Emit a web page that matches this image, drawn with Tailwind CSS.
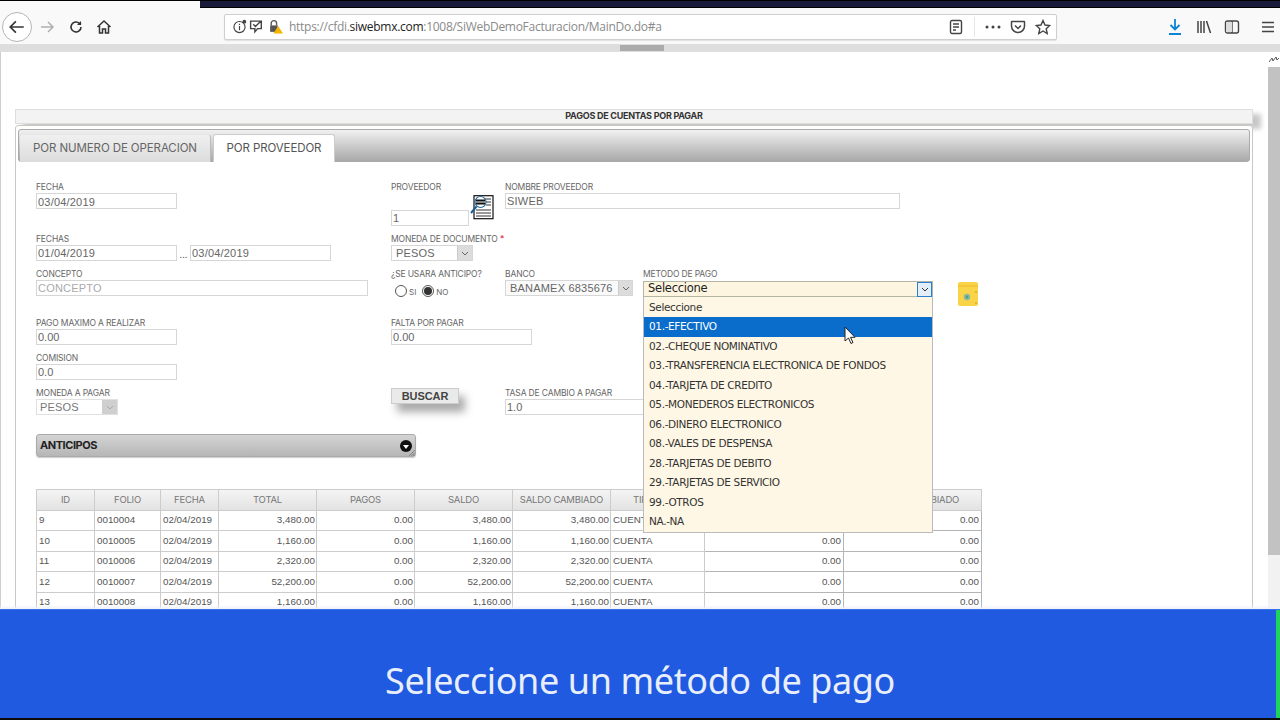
<!DOCTYPE html>
<html>
<head>
<meta charset="utf-8">
<script src="https://cdn.jsdelivr.net/npm/@tailwindcss/browser@4"></script>
</head>
<body class="w-[1280px] h-[720px] overflow-hidden bg-white relative font-['Inter',sans-serif]">

<!-- browser chrome -->
<div class="h-[9px] bg-[#f9f9fa] border-t border-black"><div class="ml-[200px] h-[7px] bg-[#1a1a3a] border-b border-black"></div></div>
<div class="h-[35px] bg-[#f9f9fa] flex items-center">
  <div class="ml-[2px] w-[30px] h-[30px] rounded-full border border-[#b5b5b5] bg-white flex items-center justify-center">
    <svg width="18" height="18" viewBox="0 0 16 16" fill="none" stroke="#333" stroke-width="1.5"><path d="M14 8H2M7 3L2 8l5 5"/></svg>
  </div>
  <svg class="ml-[7px]" width="16" height="16" viewBox="0 0 16 16" fill="none" stroke="#b0b0b0" stroke-width="1.5"><path d="M2 8h12M9 3l5 5-5 5"/></svg>
  <svg class="ml-[13px]" width="16" height="16" viewBox="0 0 16 16" fill="none" stroke="#333" stroke-width="1.6"><path d="M13 8a5 5 0 1 1-1.6-3.700L13 5.500"/><path d="M13 2v4H9" fill="#333" stroke="none"/></svg>
  <svg class="ml-[12px]" width="16" height="16" viewBox="0 0 16 16" fill="none" stroke="#333" stroke-width="1.5"><path d="M1.500 8L8 2l6.500 6M3.500 7v7h3v-4h3v4h3V7"/></svg>
  <div class="ml-[112px] w-[833px] h-[26px] bg-white border border-[#cfcfd2] rounded-[2px] flex items-center shadow-[0_1px_1px_#e0e0e0]">
    <svg class="ml-[7px]" width="15" height="15" viewBox="0 0 14 14" fill="none" stroke="#444" stroke-width="1.1"><circle cx="7" cy="7.500" r="5.200"/><path d="M7 6.500v4M7 4.500v1"/><circle cx="11.500" cy="2.500" r="1.800" fill="#444" stroke="none"/></svg>
    <svg class="ml-[2px]" width="15" height="15" viewBox="0 0 14 14" fill="none" stroke="#444" stroke-width="1.3"><path d="M1.500 2h10v7H8l-2.500 3V9h-4zM4 5l2 2 5-5"/></svg>
    <svg class="ml-[4px]" width="15" height="15" viewBox="0 0 14 14"><path d="M3 6V4a2.500 2.500 0 0 1 5 0v2" fill="none" stroke="#555" stroke-width="1.3"/><rect x="2" y="6" width="7" height="6" fill="#555"/><path d="M9.500 6.500L14 13.500H5z" fill="#f5b400"/></svg>
    <span class="ml-[6px] text-[12px] tracking-[-0.28px] text-[#8a8a8a] font-['Open_Sans',sans-serif] whitespace-nowrap">https://cfdi.<span class="text-[#222]">siwebmx.com</span>:1008/SiWebDemoFacturacion/MainDo.do#a</span>
    <div class="ml-auto flex items-center">
      <svg width="14" height="16" viewBox="0 0 14 16" fill="none" stroke="#444" stroke-width="1.4"><rect x="1.500" y="1.500" width="11" height="13" rx="1.500"/><path d="M4 5h6M4 8h6M4 11h3"/></svg>
      <div class="ml-[11px] w-px h-[20px] bg-[#e6e6e6]"></div>
      <svg class="ml-[10px]" width="16" height="4" viewBox="0 0 16 4" fill="#444"><circle cx="2" cy="2" r="1.500"/><circle cx="8" cy="2" r="1.500"/><circle cx="14" cy="2" r="1.500"/></svg>
      <svg class="ml-[9px]" width="16" height="16" viewBox="0 0 16 16" fill="none" stroke="#444" stroke-width="1.5"><path d="M2 2.500h12a.5.5 0 0 1 .5.5v4a6.500 6.500 0 0 1-13 0V3a.5.5 0 0 1 .5-.5zM5 6.500L8 9.500l3-3"/></svg>
      <svg class="ml-[9px] mr-[5px]" width="16" height="16" viewBox="0 0 16 16" fill="none" stroke="#444" stroke-width="1.4"><path d="M8 1.500l2 4.500 4.800.5-3.600 3.200 1 4.800L8 12l-4.200 2.500 1-4.800L1.200 6.500 6 6z"/></svg>
    </div>
  </div>
  <svg class="ml-[110px]" width="16" height="18" viewBox="0 0 16 18" fill="none" stroke="#0a84d6" stroke-width="1.8"><path d="M8 1v10M3.500 7L8 11.500 12.500 7M2 16h12"/></svg>
  <svg class="ml-[13px]" width="16" height="16" viewBox="0 0 16 16" fill="none" stroke="#444" stroke-width="1.5"><path d="M2 2v12M5 2v12M8 2v12M10.500 2l4 12"/></svg>
  <svg class="ml-[12px]" width="16" height="16" viewBox="0 0 16 16" fill="none" stroke="#444" stroke-width="1.4"><rect x="1.500" y="2" width="13" height="12" rx="2"/><path d="M8 2v12"/><path d="M2 3h6v10H2z" fill="#ddd" stroke="none"/></svg>
  <svg class="ml-[21px]" width="14" height="12" viewBox="0 0 14 12" fill="none" stroke="#444" stroke-width="1.5"><path d="M1 1.500h12M1 6h12M1 10.500h12"/></svg>
</div>
<!-- horizontal scrollbar -->
<div class="h-[8px] bg-[#dedede] flex"><div class="ml-[620px] w-[44px] my-[1px] bg-[#ababab]"></div></div>

<!-- page -->
<div class="relative h-[557px] flex">
  <div class="w-px bg-[#cfcfcf]"></div>
  <div class="w-[1267px] overflow-hidden pl-[14px] pr-[14px] pt-[57px] text-[#666]">
    <!-- title -->
    <div class="w-[1238px] h-[15px] pb-[1px] bg-[#f3f3f3] border border-[#ddd] flex items-center justify-center font-bold text-[9px] tracking-[-0.25px] text-[#333] shadow-[8px_5px_5px_rgba(0,0,0,0.22)]">PAGOS DE CUENTAS POR PAGAR</div>
    <!-- panel -->
    <div class="relative bg-white w-[1238px] mt-[1px] h-[600px] border border-[#c8c8c0] rounded-[3px] pt-[3px] px-[2px]">
      <!-- tabs -->
      <div class="h-[33px] rounded-[3px] border border-[#aaa] bg-gradient-to-b from-[#f1f1f1] to-[#a9a9a9] flex pl-[1px] items-end">
        <div class="w-[191px] h-[27px] -mb-px rounded-t-[3px] border-r border-[#bbb] bg-gradient-to-b from-[#f0f0f0] to-[#dcdcdc] flex items-center justify-center text-[11.5px] text-[#666] tracking-[-0.1px]">POR NUMERO DE OPERACION</div>
        <div class="w-[122px] h-[28px] ml-[2px] -mb-px rounded-t-[3px] border border-b-0 border-[#ccc] bg-white flex items-center justify-center text-[11.5px] text-[#555] tracking-[-0.1px]">POR PROVEEDOR</div>
      </div>

      <!-- form -->
      <div class="pl-[18px] pt-[20px] relative">
        <!-- row 1 -->
        <div class="flex h-[52px]">
          <div class="w-[355px]">
            <div class="text-[8.5px] leading-[11px] tracking-[-0.15px]">FECHA</div>
            <div class="w-[141px] h-[16px] border border-[#d6d6d6] px-[1px] text-[11px] leading-[16px] tracking-[0.2px] font-['Liberation_Sans',sans-serif]">03/04/2019</div>
          </div>
          <div class="w-[114px] relative">
            <div class="text-[8.5px] leading-[11px] tracking-[-0.15px]">PROVEEDOR</div>
            <div class="mt-[17px] w-[78px] h-[16px] border border-[#d6d6d6] px-[1px] text-[11px] leading-[14px] font-['Liberation_Sans',sans-serif]">1</div>
            <svg class="absolute left-[78px] top-[13px]" width="25" height="26" viewBox="0 0 25 26" fill="none"><rect x="5" y="0.700" width="19" height="23" fill="#fff" stroke="#111" stroke-width="1.200"/><path d="M14 4h8M17 7h5M17 10h5M7 15h15M7 18h15M7 21h15" stroke="#333"/><circle cx="11.500" cy="7" r="5.500" fill="#fff" stroke="#2a6a9a" stroke-width="1.200"/><path d="M7 5.500h9M7 8.500h9" stroke="#111" stroke-width="2"/><path d="M7.500 11.500L2 18" stroke="#1c5f8f" stroke-width="2"/></svg>
          </div>
          <div>
            <div class="text-[8.5px] leading-[11px] tracking-[-0.15px]">NOMBRE PROVEEDOR</div>
            <div class="w-[395px] h-[16px] border border-[#d6d6d6] px-[1px] text-[11px] leading-[14px] tracking-[0.2px] font-['Liberation_Sans',sans-serif]">SIWEB</div>
          </div>
        </div>
        <!-- row 2 -->
        <div class="flex h-[35px]">
          <div class="w-[355px]">
            <div class="text-[8.5px] leading-[11px] tracking-[-0.15px]">FECHAS</div>
            <div class="flex items-end">
              <div class="w-[141px] h-[16px] border border-[#d6d6d6] px-[1px] text-[11px] leading-[14px] tracking-[0.2px] font-['Liberation_Sans',sans-serif]">01/04/2019</div>
              <span class="w-[13px] text-center text-[9px] leading-[12px]">...</span>
              <div class="w-[141px] h-[16px] border border-[#d6d6d6] px-[1px] text-[11px] leading-[14px] tracking-[0.2px] font-['Liberation_Sans',sans-serif]">03/04/2019</div>
            </div>
          </div>
          <div>
            <div class="text-[8.5px] leading-[11px] tracking-[-0.15px] whitespace-nowrap">MONEDA DE DOCUMENTO <span class="text-[#d33]">*</span></div>
            <div class="w-[82px] h-[16px] border border-[#d6d6d6] flex text-[11px] font-['Liberation_Sans',sans-serif] leading-[14px] pl-[4px] tracking-[0.2px]">PESOS
              <div class="ml-auto w-[15px] bg-[#dcdcdc] border-l border-[#ccc] flex items-center justify-center"><svg width="8" height="5" viewBox="0 0 8 5" fill="none" stroke="#666"><path d="M1 1l3 3 3-3"/></svg></div>
            </div>
          </div>
        </div>
        <!-- row 3 -->
        <div class="flex h-[49px]">
          <div class="w-[355px]">
            <div class="text-[8.5px] leading-[11px] tracking-[-0.15px]">CONCEPTO</div>
            <div class="w-[332px] h-[16px] border border-[#d6d6d6] px-[1px] text-[11px] leading-[14px] tracking-[0.2px] text-[#aaa] font-['Liberation_Sans',sans-serif]">CONCEPTO</div>
          </div>
          <div class="w-[114px]">
            <div class="text-[8.5px] leading-[11px] tracking-[-0.15px] whitespace-nowrap">¿SE USARA ANTICIPO?</div>
            <div class="mt-[3px] flex items-center pl-[4px] text-[8px]">
              <span class="w-[12px] h-[12px] rounded-full border border-[#555] bg-white"></span>
              <span class="ml-[2px] mt-[3px]">SI</span>
              <span class="ml-[6px] w-[12px] h-[12px] rounded-full border border-[#555] bg-white flex items-center justify-center"><span class="w-[8px] h-[8px] rounded-full bg-[#333]"></span></span>
              <span class="ml-[2px] mt-[3px]">NO</span>
            </div>
          </div>
          <div class="w-[138px]">
            <div class="text-[8.5px] leading-[11px] tracking-[-0.15px]">BANCO</div>
            <div class="w-[128px] h-[16px] border border-[#d6d6d6] bg-[#fafafa] flex text-[11px] font-['Liberation_Sans',sans-serif] leading-[14px] pl-[4px] tracking-[0.2px] whitespace-nowrap">BANAMEX 6835676
              <div class="ml-auto w-[14px] bg-[#dcdcdc] border-l border-[#ccc] flex items-center justify-center"><svg width="8" height="5" viewBox="0 0 8 5" fill="none" stroke="#666"><path d="M1 1l3 3 3-3"/></svg></div>
            </div>
          </div>
          <div class="relative">
            <div class="text-[8.5px] leading-[11px] tracking-[-0.15px] whitespace-nowrap">METODO DE PAGO</div>
          </div>
        </div>
        <!-- row 4 -->
        <div class="flex h-[35px]">
          <div class="w-[355px]">
            <div class="text-[8.5px] leading-[11px] tracking-[-0.15px]">PAGO MAXIMO A REALIZAR</div>
            <div class="w-[141px] h-[16px] border border-[#d6d6d6] px-[1px] text-[11px] leading-[14px] font-['Liberation_Sans',sans-serif]">0.00</div>
          </div>
          <div>
            <div class="text-[8.5px] leading-[11px] tracking-[-0.15px]">FALTA POR PAGAR</div>
            <div class="w-[141px] h-[16px] border border-[#d6d6d6] px-[1px] text-[11px] leading-[14px] font-['Liberation_Sans',sans-serif]">0.00</div>
          </div>
        </div>
        <!-- row 5 -->
        <div class="h-[35px]">
          <div class="text-[8.5px] leading-[11px] tracking-[-0.15px]">COMISION</div>
          <div class="w-[141px] h-[16px] border border-[#d6d6d6] px-[1px] text-[11px] leading-[14px] font-['Liberation_Sans',sans-serif]">0.0</div>
        </div>
        <!-- row 6 -->
        <div class="flex h-[46px]">
          <div class="w-[355px]">
            <div class="text-[8.5px] leading-[11px] tracking-[-0.15px]">MONEDA A PAGAR</div>
            <div class="w-[82px] h-[16px] border border-[#e0e0e0] flex text-[11px] text-[#777] font-['Liberation_Sans',sans-serif] leading-[14px] pl-[3px] tracking-[0.2px]">PESOS
              <div class="ml-auto w-[15px] bg-[#cfcfcf] flex items-center justify-center"><svg width="8" height="5" viewBox="0 0 8 5" fill="none" stroke="#aaa"><path d="M1 1l3 3 3-3"/></svg></div>
            </div>
          </div>
          <div class="w-[114px]">
            <div class="w-[68px] h-[16px] bg-[#eaeaea] border border-[#ccc] flex items-center justify-center text-[11px] font-bold text-[#444] tracking-[-0.1px] shadow-[6px_8px_8px_#aaa] font-['Liberation_Sans',sans-serif]">BUSCAR</div>
          </div>
          <div>
            <div class="text-[8.5px] leading-[11px] tracking-[-0.15px] whitespace-nowrap">TASA DE CAMBIO A PAGAR</div>
            <div class="w-[141px] h-[16px] border border-[#d6d6d6] px-[1px] text-[11px] leading-[14px] font-['Liberation_Sans',sans-serif]">1.0</div>
          </div>
        </div>
        <!-- anticipos -->
        <div class="relative w-[380px] h-[23px] rounded-[3px] border border-[#aaa] bg-gradient-to-b from-[#d4d4d4] to-[#b6b6b6] flex items-center pl-[3px] pr-[3px] text-[11px] font-bold text-[#222] tracking-[-0.45px] shadow-[0_1px_1px_#ccc]">ANTICIPOS
          <svg class="ml-auto" width="12" height="12" viewBox="0 0 12 12"><circle cx="6" cy="6" r="6" fill="#111"/><path d="M3 5h6L6 9z" fill="#fff"/></svg>
          <svg class="absolute right-0 bottom-0" width="6" height="6" viewBox="0 0 6 6" fill="none" stroke="#666" stroke-width="0.7"><path d="M0 6l6-6M2.500 6L6 2.500M4.500 6L6 4.500"/></svg>
        </div>
        <!-- table -->
        <table class="mt-[32px] w-[945px] table-fixed border-collapse font-['Liberation_Sans',sans-serif] text-[9.8px] text-[#555]">
          <colgroup><col class="w-[58px]"><col class="w-[66px]"><col class="w-[58px]"><col class="w-[98px]"><col class="w-[98px]"><col class="w-[98px]"><col class="w-[98px]"><col class="w-[94px]"><col class="w-[139px]"><col class="w-[138px]"></colgroup>
          <thead>
            <tr class="h-[21px] bg-gradient-to-b from-[#f4f4f4] to-[#e2e2e2] font-['Inter',sans-serif] text-[9.500px] text-[#777] tracking-[-0.2px]">
              <th class="font-normal border border-[#ccc]">ID</th><th class="font-normal border border-[#ccc]">FOLIO</th><th class="font-normal border border-[#ccc]">FECHA</th><th class="font-normal border border-[#ccc]">TOTAL</th><th class="font-normal border border-[#ccc]">PAGOS</th><th class="font-normal border border-[#ccc]">SALDO</th><th class="font-normal border border-[#ccc] whitespace-nowrap">SALDO CAMBIADO</th><th class="font-normal border border-[#ccc] whitespace-nowrap">TIPO PAGO</th><th class="font-normal border border-[#ccc]">PAGO</th><th class="font-normal border border-[#ccc] whitespace-nowrap">IMPORTE CAMBIADO</th>
            </tr>
          </thead>
          <tbody>
            <tr class="h-[20.4px]"><td class="border border-[#ccc] px-[2px]">9</td><td class="border border-[#ccc] px-[2px]">0010004</td><td class="border border-[#ccc] px-[2px]">02/04/2019</td><td class="border border-[#ccc] px-[1px] text-right">3,480.00</td><td class="border border-[#ccc] px-[1px] text-right">0.00</td><td class="border border-[#ccc] px-[1px] text-right">3,480.00</td><td class="border border-[#ccc] px-[1px] text-right">3,480.00</td><td class="border border-[#ccc] px-[2px]">CUENTA</td><td class="border border-[#b5b5b5] px-[2px] text-right">0.00</td><td class="border border-[#b5b5b5] px-[2px] text-right">0.00</td></tr>
            <tr class="h-[20.4px]"><td class="border border-[#ccc] px-[2px]">10</td><td class="border border-[#ccc] px-[2px]">0010005</td><td class="border border-[#ccc] px-[2px]">02/04/2019</td><td class="border border-[#ccc] px-[1px] text-right">1,160.00</td><td class="border border-[#ccc] px-[1px] text-right">0.00</td><td class="border border-[#ccc] px-[1px] text-right">1,160.00</td><td class="border border-[#ccc] px-[1px] text-right">1,160.00</td><td class="border border-[#ccc] px-[2px]">CUENTA</td><td class="border border-[#b5b5b5] px-[2px] text-right">0.00</td><td class="border border-[#b5b5b5] px-[2px] text-right">0.00</td></tr>
            <tr class="h-[20.4px]"><td class="border border-[#ccc] px-[2px]">11</td><td class="border border-[#ccc] px-[2px]">0010006</td><td class="border border-[#ccc] px-[2px]">02/04/2019</td><td class="border border-[#ccc] px-[1px] text-right">2,320.00</td><td class="border border-[#ccc] px-[1px] text-right">0.00</td><td class="border border-[#ccc] px-[1px] text-right">2,320.00</td><td class="border border-[#ccc] px-[1px] text-right">2,320.00</td><td class="border border-[#ccc] px-[2px]">CUENTA</td><td class="border border-[#b5b5b5] px-[2px] text-right">0.00</td><td class="border border-[#b5b5b5] px-[2px] text-right">0.00</td></tr>
            <tr class="h-[20.4px]"><td class="border border-[#ccc] px-[2px]">12</td><td class="border border-[#ccc] px-[2px]">0010007</td><td class="border border-[#ccc] px-[2px]">02/04/2019</td><td class="border border-[#ccc] px-[1px] text-right">52,200.00</td><td class="border border-[#ccc] px-[1px] text-right">0.00</td><td class="border border-[#ccc] px-[1px] text-right">52,200.00</td><td class="border border-[#ccc] px-[1px] text-right">52,200.00</td><td class="border border-[#ccc] px-[2px]">CUENTA</td><td class="border border-[#b5b5b5] px-[2px] text-right">0.00</td><td class="border border-[#b5b5b5] px-[2px] text-right">0.00</td></tr>
            <tr class="h-[20.4px]"><td class="border border-[#ccc] px-[2px]">13</td><td class="border border-[#ccc] px-[2px]">0010008</td><td class="border border-[#ccc] px-[2px]">02/04/2019</td><td class="border border-[#ccc] px-[1px] text-right">1,160.00</td><td class="border border-[#ccc] px-[1px] text-right">0.00</td><td class="border border-[#ccc] px-[1px] text-right">1,160.00</td><td class="border border-[#ccc] px-[1px] text-right">1,160.00</td><td class="border border-[#ccc] px-[2px]">CUENTA</td><td class="border border-[#b5b5b5] px-[2px] text-right">0.00</td><td class="border border-[#b5b5b5] px-[2px] text-right">0.00</td></tr>
          </tbody>
        </table>
      </div>
    </div>
  </div>
  <!-- vertical scrollbar -->
  <div class="w-[12px] bg-[#f2f2f2] ml-auto">
    <div class="h-[15px] bg-white flex items-center justify-center"><svg width="10" height="6" viewBox="0 0 10 6" fill="none" stroke="#555" stroke-width="1"><path d="M0 5l3-4 1 3 3-4 1 3 2-2"/></svg></div>
    <div class="h-[488px] bg-[#c2c2c2]"></div>
  </div>

  <!-- bottom fade -->
  <div class="absolute left-0 right-0 bottom-0 h-[4px] bg-gradient-to-b from-transparent to-[#eef1f6]"></div>

  <!-- dropdown overlay -->
  <div class="absolute left-[643px] top-[229px] w-[290px]">
    <div class="h-[16px] bg-[#fdf5e0] border border-[#b5b5a5] flex items-center pl-[4px] text-[11.5px] text-[#222] font-['DejaVu_Sans',sans-serif] tracking-[-0.25px]">Seleccione
      <div class="ml-auto w-[15px] h-[15px] bg-[#e4eef8] border border-[#2a7fd0] flex items-center justify-center"><svg width="8" height="5" viewBox="0 0 8 5" fill="none" stroke="#333"><path d="M1 1l3 3 3-3"/></svg></div>
    </div>
    <div class="bg-[#fef7e5] border border-t-0 border-[#bbb] text-[10.5px] leading-[19.5px] pt-[0.5px] text-[#333] font-['DejaVu_Sans',sans-serif] tracking-[-0.35px]">
      <div class="pl-[5px]">Seleccione</div>
      <div class="pl-[5px] bg-[#0a6ccb] text-white">01.-EFECTIVO</div>
      <div class="pl-[5px]">02.-CHEQUE NOMINATIVO</div>
      <div class="pl-[5px]">03.-TRANSFERENCIA ELECTRONICA DE FONDOS</div>
      <div class="pl-[5px]">04.-TARJETA DE CREDITO</div>
      <div class="pl-[5px]">05.-MONEDEROS ELECTRONICOS</div>
      <div class="pl-[5px]">06.-DINERO ELECTRONICO</div>
      <div class="pl-[5px]">08.-VALES DE DESPENSA</div>
      <div class="pl-[5px]">28.-TARJETAS DE DEBITO</div>
      <div class="pl-[5px]">29.-TARJETAS DE SERVICIO</div>
      <div class="pl-[5px]">99.-OTROS</div>
      <div class="pl-[5px]">NA.-NA</div>
    </div>
  </div>
  <!-- cursor -->
  <svg class="absolute left-[844px] top-[274px]" width="13" height="19" viewBox="0 0 13 19"><path d="M1 1v14l3.500-3 2.500 5.500 2-1-2.500-5.200H11z" fill="#fff" stroke="#222"/></svg>
  <!-- yellow icon -->
  <svg class="absolute left-[957px] top-[229px]" width="22" height="26" viewBox="0 0 22 26"><rect x="1" y="1" width="20" height="24" rx="2" fill="#f9d348"/><path d="M1 5h20" stroke="#f3c233" stroke-width="1.500"/><circle cx="10" cy="16" r="3.200" fill="#8ab99c"/><circle cx="10" cy="16" r="1.400" fill="#4f9e8c"/><circle cx="19" cy="11" r="1" fill="#e4a52a"/><circle cx="19" cy="22" r="1" fill="#e4a52a"/></svg>
</div>

<!-- caption -->
<div class="h-[111px] pt-[34px] bg-[#1f5ae0] border-t border-[#3a70e5] border-b-2 border-b-[#0c0c0c] flex items-center justify-center text-[36px] tracking-[-0.4px] text-[#e8eefb] font-['Noto_Sans',sans-serif] relative">
  Seleccione un método de pago
  <div class="absolute right-0 top-0 bottom-0 w-[4px] bg-[#1fd45a]"></div>
</div>
</body>
</html>
